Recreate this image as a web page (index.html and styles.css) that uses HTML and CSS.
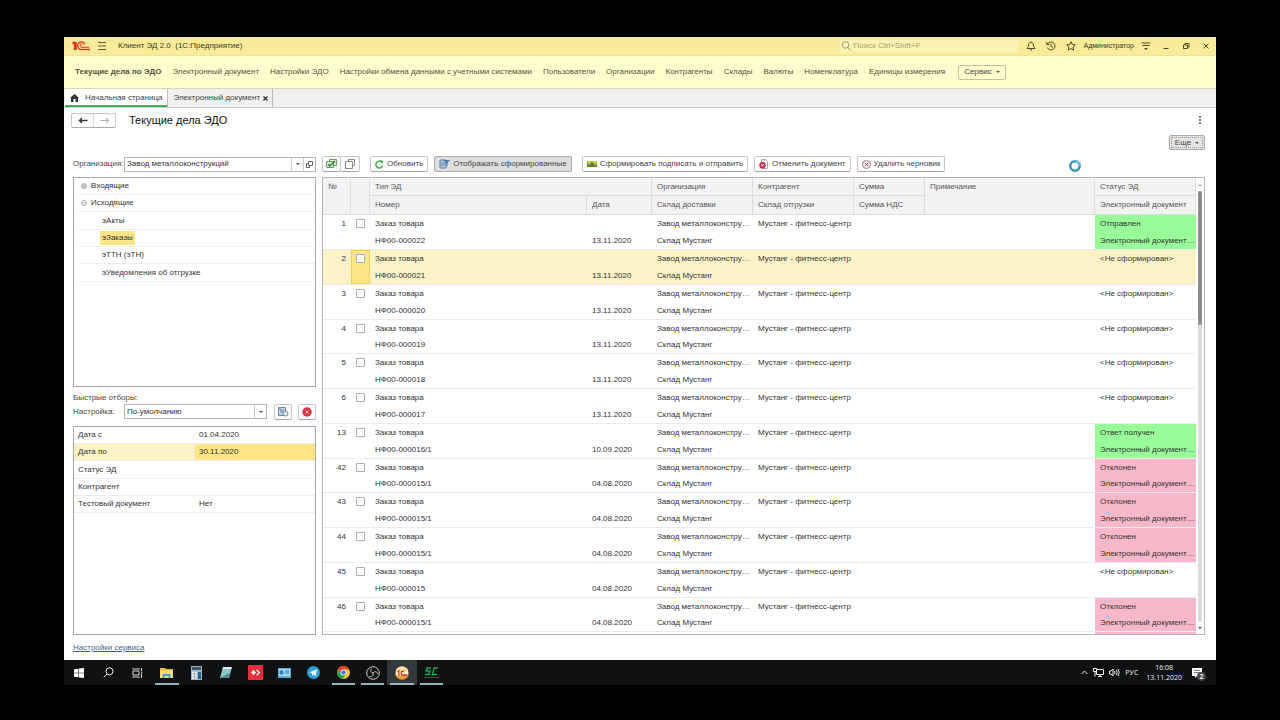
FILE: index.html
```html
<!DOCTYPE html>
<html lang="ru">
<head>
<meta charset="utf-8">
<title>Клиент ЭД 2.0</title>
<link rel="stylesheet" href="styles.css">
</head>
<body>
<div class="screen">
<header class="titlebar">
  <svg class="logo" width="18" height="10" viewBox="0 0 18 10" fill="none" stroke="#d9341f"><path d="M.5 2.500H2.500V9M4 1v8M.5 2 3 1" stroke-width="1.500"/><path d="M13 3.200A3.800 3.800 0 1 0 10 8.500H18" stroke-width="1.300"/><path d="M11.300 3.800A1.700 1.700 0 1 0 10 6.300H17" stroke-width="1"/></svg>
  <button class="icon-btn" aria-label="Меню"><svg width="10" height="8" viewBox="0 0 10 8" stroke="#5c5836"><path d="M1 .5h8M1 4h8M1 7.500h8"/></svg></button>
  <span class="app-name">Клиент ЭД 2.0 &nbsp;(1С:Предприятие)</span>
  <label class="search"><svg width="10" height="10" viewBox="0 0 10 10" fill="none" stroke="#a39c62"><circle cx="4.500" cy="4" r="3.300"/><path d="m7 6.500 2.500 3"/></svg><input type="search" placeholder="Поиск Ctrl+Shift+F" aria-label="Поиск"></label>
  <div class="tools">
    <button class="icon-btn" aria-label="Уведомления"><svg width="10" height="10" viewBox="0 0 10 10" fill="none" stroke="#4c4828"><path d="M1 7.500h8L7.500 5.500C7.500 2.500 6.500 1 5 1S2.500 2.500 2.500 5.500zM4 9h2"/></svg></button>
    <button class="icon-btn" aria-label="История"><svg width="10" height="10" viewBox="0 0 10 10" fill="none" stroke="#4c4828"><path d="M1.500 3A4 4 0 1 1 1.300 6.500M.8 1v2.500h2.500M5 2.500V5.300l2 1"/></svg></button>
    <button class="icon-btn" aria-label="Избранное"><svg width="10" height="10" viewBox="0 0 10 10" fill="none" stroke="#4c4828"><path d="m5 .8 1.300 2.700 3 .4-2.200 2.100.5 3L5 7.600 2.400 9l.5-3L.7 3.900l3-.4z"/></svg></button>
    <span class="user">Администратор</span>
    <button class="icon-btn" aria-label="Настройки"><svg width="10" height="8" viewBox="0 0 10 8" stroke="#4c4828"><path d="M.5 1h9M1.500 3.500h7"/><path d="m3 6 2 2 2-2z" fill="#4c4828" stroke="none"/></svg></button>
  </div>
  <div class="win">
    <button class="icon-btn" aria-label="Свернуть"><svg width="8" height="8" viewBox="0 0 8 8" stroke="#4c4828"><path d="M1.500 6.500h5"/></svg></button>
    <button class="icon-btn" aria-label="Развернуть"><svg width="8" height="8" viewBox="0 0 8 8" fill="none" stroke="#4c4828"><path d="M1.500 3h4v3.500h-4zM3 3V1.500h4V5H5.500"/></svg></button>
    <button class="icon-btn" aria-label="Закрыть"><svg width="8" height="8" viewBox="0 0 8 8" stroke="#4c4828"><path d="m1.500 1.500 5 5M6.500 1.500l-5 5"/></svg></button>
  </div>
</header>
<nav class="sections">
  <a href="#" class="current">Текущие дела по ЭДО</a><a href="#">Электронный документ</a><a href="#">Настройки ЭДО</a><a href="#">Настройки обмена данными с учетными системами</a><a href="#">Пользователи</a><a href="#">Организации</a><a href="#">Контрагенты</a><a href="#">Склады</a><a href="#">Валюты</a><a href="#">Номенклатура</a><a href="#">Единицы измерения</a>
  <button class="service">Сервис <i class="caret"></i></button>
</nav>
<div class="tabs">
  <button class="tab active"><svg width="9" height="8" viewBox="0 0 9 8" fill="#333"><path d="M4.500 0 9 4H8v4H5.500V5h-2v3H1V4H0z"/></svg>Начальная страница</button>
  <button class="tab">Электронный документ <svg width="5" height="5" viewBox="0 0 5 5" stroke="#333" stroke-width="1.200"><path d="m.5.5 4 4M4.500.5l-4 4"/></svg></button>
</div>
<main class="page">
  <div class="heading">
    <div class="history">
      <button aria-label="Назад"><svg width="10" height="7" viewBox="0 0 10 7" fill="none" stroke="#333" stroke-width="1.400"><path d="M9.500 3.500H1.500M4 1 1.500 3.500 4 6"/></svg></button><button aria-label="Вперед"><svg width="10" height="7" viewBox="0 0 10 7" fill="none" stroke="#b4b4b4" stroke-width="1.200"><path d="M.5 3.500h8M6 1l2.500 2.500L6 6"/></svg></button>
    </div>
    <h1>Текущие дела ЭДО</h1>
    <button class="icon-btn dots" aria-label="Ещё"><svg width="2" height="8" viewBox="0 0 2 8" fill="#777"><path d="M0 0h2v2H0zM0 3h2v2H0zM0 6h2v2H0z"/></svg></button>
  </div>
  <div class="more-row"><button class="btn more">Еще <i class="caret"></i></button></div>
  <div class="workspace">
    <section class="side">
      <div class="field">
        <label for="org">Организация:</label>
        <div class="combo"><input id="org" value="Завод металлоконструкций"><button aria-label="Выбрать"><i class="caret"></i></button><button aria-label="Открыть"><svg width="7" height="7" viewBox="0 0 7 7" fill="none" stroke="#666"><path d="M2.500.5h4v4h-4zM2.500 2.500h-2v4h3v-2"/></svg></button></div>
      </div>
      <ul class="tree">
        <li><svg width="6" height="6" viewBox="0 0 6 6" fill="none" stroke="#aaa"><circle cx="3" cy="3" r="2.500"/><path d="M1 3h4M3 1v4"/></svg>Входящие</li>
        <li><svg width="6" height="6" viewBox="0 0 6 6" fill="none" stroke="#aaa"><circle cx="3" cy="3" r="2.500"/><path d="M1 3h4"/></svg>Исходящие</li>
        <li class="leaf"><span>эАкты</span></li>
        <li class="leaf"><span class="picked">эЗаказы</span></li>
        <li class="leaf"><span>эТТН (эТН)</span></li>
        <li class="leaf"><span>эУведомления об отгрузке</span></li>
      </ul>
      <p class="caption">Быстрые отборы:</p>
      <div class="field preset">
        <label for="preset">Настройка:</label>
        <div class="combo"><select id="preset"><option>По-умолчанию</option></select><span class="drop"><i class="caret"></i></span></div>
        <button class="btn square" aria-label="Сохранить"><svg width="11" height="10" viewBox="0 0 11 10" fill="#c9d9e8" stroke="#6f859b"><path d="M.5.5h7v8h-7z"/><path d="M2 3h4M2 5h3M2 1v2"/><circle cx="7.500" cy="6.500" r="2.500" fill="#e8f0f7"/></svg></button>
        <button class="btn square" aria-label="Удалить"><svg width="10" height="10" viewBox="0 0 10 10"><circle cx="5" cy="5" r="4.700" fill="#d9353f"/><path d="m3.500 3.500 3 3m0-3-3 3" stroke="#ffc9c9"/></svg></button>
      </div>
      <div class="filters">
        <table>
          <tr><th scope="row">Дата с</th><td>01.04.2020</td></tr>
          <tr class="picked"><th scope="row">Дата по</th><td>30.11.2020</td></tr>
          <tr><th scope="row">Статус ЭД</th><td></td></tr>
          <tr><th scope="row">Контрагент</th><td></td></tr>
          <tr><th scope="row">Тестовый документ</th><td>Нет</td></tr>
        </table>
      </div>
    </section>
    <section class="docs">
      <div class="commands">
        <div class="pair"><button class="btn" aria-label="Отметить все"><svg width="11" height="10" viewBox="0 0 11 10" fill="#dff0dc" stroke="#6b9a67"><path d="M3.500.5h7v6h-7z"/><path d="M.5 2.500h7v6h-7z"/><path d="m2 5 2 2 5-5" fill="none" stroke="#23902b" stroke-width="1.500"/></svg></button><button class="btn" aria-label="Снять отметки"><svg width="10" height="10" viewBox="0 0 10 10" fill="#fff" stroke="#888"><path d="M3.500.5h6v6h-6z"/><path d="M.5 2.500h7v7h-7z"/></svg></button></div>
        <button class="btn refresh"><svg width="9" height="9" viewBox="0 0 9 9" fill="none" stroke="#35a046" stroke-width="1.400"><path d="M7.800 5.500A3.500 3.500 0 1 1 6.500 1.700"/><path d="M5 .2 8.500 1 7 3.800z" fill="#35a046" stroke="none"/></svg>Обновить</button>
        <button class="btn pressed"><svg width="11" height="10" viewBox="0 0 11 10"><path d="M1 1h6v8H1z" fill="#b9cfe2" stroke="#5e7f9e"/><path d="M2 4h4M2 6h4" stroke="#5e7f9e"/><path d="M4 1h7L8.500 4v3.500L7 6V4z" fill="#4c7dab"/></svg>Отображать сформированные</button>
        <button class="btn send"><svg width="10" height="8" viewBox="0 0 10 8"><path d="M0 1h10v6H0z" fill="#b7c84a"/><path d="M0 7V3l3 2 2-3 3 3 2-1v3z" fill="#5f8a35"/><circle cx="5" cy="4" r="1.500" fill="#805a35"/></svg>Сформировать подписать и отправить</button>
        <button class="btn"><svg width="10" height="10" viewBox="0 0 10 10"><path d="M2.500.5h4l2 2v7h-6z" fill="#fff" stroke="#b9a0a8"/><circle cx="3.500" cy="6.300" r="3.200" fill="#c22a45"/><path d="m2.300 5.100 2.400 2.400m0-2.400L2.300 7.500" stroke="#fff"/></svg>Отменить документ</button>
        <button class="btn"><svg width="9" height="9" viewBox="0 0 9 9" fill="#f6eaea" stroke="#a08484"><circle cx="4.500" cy="4.500" r="4"/><path d="m3 3 3 3m0-3L3 6" stroke="#9a4c58"/></svg>Удалить черновик</button>
      </div>
      <div class="grid">
        <div class="rows">
        <table>
          <colgroup><col class="c-num"><col class="c-check"><col class="c-type"><col class="c-date"><col class="c-org"><col class="c-org"><col class="c-sum"><col><col class="c-org"></colgroup>
          <thead>
            <tr><th rowspan="2">№</th><th rowspan="2"></th><th colspan="2">Тип ЭД</th><th>Организация</th><th>Контрагент</th><th>Сумма</th><th rowspan="2">Примечание</th><th>Статус ЭД</th></tr>
            <tr><th>Номер</th><th>Дата</th><th>Склад доставки</th><th>Склад отгрузки</th><th>Сумма НДС</th><th>Электронный документ</th></tr>
          </thead>
          <tbody class="sent"><tr><td rowspan="2">1</td><td rowspan="2"><input type="checkbox" aria-label="1"></td><td colspan="2">Заказ товара</td><td>Завод металлоконстру…</td><td>Мустанг - фитнесс-центр</td><td></td><td rowspan="2"></td><td>Отправлен</td></tr><tr><td>НФ00-000022</td><td>13.11.2020</td><td>Склад Мустанг</td><td></td><td></td><td>Электронный документ…</td></tr></tbody>
          <tbody class="selected"><tr><td rowspan="2">2</td><td rowspan="2"><input type="checkbox" aria-label="2"></td><td colspan="2">Заказ товара</td><td>Завод металлоконстру…</td><td>Мустанг - фитнесс-центр</td><td></td><td rowspan="2"></td><td>&lt;Не сформирован&gt;</td></tr><tr><td>НФ00-000021</td><td>13.11.2020</td><td>Склад Мустанг</td><td></td><td></td><td></td></tr></tbody>
          <tbody><tr><td rowspan="2">3</td><td rowspan="2"><input type="checkbox" aria-label="3"></td><td colspan="2">Заказ товара</td><td>Завод металлоконстру…</td><td>Мустанг - фитнесс-центр</td><td></td><td rowspan="2"></td><td>&lt;Не сформирован&gt;</td></tr><tr><td>НФ00-000020</td><td>13.11.2020</td><td>Склад Мустанг</td><td></td><td></td><td></td></tr></tbody>
          <tbody><tr><td rowspan="2">4</td><td rowspan="2"><input type="checkbox" aria-label="4"></td><td colspan="2">Заказ товара</td><td>Завод металлоконстру…</td><td>Мустанг - фитнесс-центр</td><td></td><td rowspan="2"></td><td>&lt;Не сформирован&gt;</td></tr><tr><td>НФ00-000019</td><td>13.11.2020</td><td>Склад Мустанг</td><td></td><td></td><td></td></tr></tbody>
          <tbody><tr><td rowspan="2">5</td><td rowspan="2"><input type="checkbox" aria-label="5"></td><td colspan="2">Заказ товара</td><td>Завод металлоконстру…</td><td>Мустанг - фитнесс-центр</td><td></td><td rowspan="2"></td><td>&lt;Не сформирован&gt;</td></tr><tr><td>НФ00-000018</td><td>13.11.2020</td><td>Склад Мустанг</td><td></td><td></td><td></td></tr></tbody>
          <tbody><tr><td rowspan="2">6</td><td rowspan="2"><input type="checkbox" aria-label="6"></td><td colspan="2">Заказ товара</td><td>Завод металлоконстру…</td><td>Мустанг - фитнесс-центр</td><td></td><td rowspan="2"></td><td>&lt;Не сформирован&gt;</td></tr><tr><td>НФ00-000017</td><td>13.11.2020</td><td>Склад Мустанг</td><td></td><td></td><td></td></tr></tbody>
          <tbody class="sent"><tr><td rowspan="2">13</td><td rowspan="2"><input type="checkbox" aria-label="13"></td><td colspan="2">Заказ товара</td><td>Завод металлоконстру…</td><td>Мустанг - фитнесс-центр</td><td></td><td rowspan="2"></td><td>Ответ получен</td></tr><tr><td>НФ00-000016/1</td><td>10.09.2020</td><td>Склад Мустанг</td><td></td><td></td><td>Электронный документ…</td></tr></tbody>
          <tbody class="declined"><tr><td rowspan="2">42</td><td rowspan="2"><input type="checkbox" aria-label="42"></td><td colspan="2">Заказ товара</td><td>Завод металлоконстру…</td><td>Мустанг - фитнесс-центр</td><td></td><td rowspan="2"></td><td>Отклонен</td></tr><tr><td>НФ00-000015/1</td><td>04.08.2020</td><td>Склад Мустанг</td><td></td><td></td><td>Электронный документ…</td></tr></tbody>
          <tbody class="declined"><tr><td rowspan="2">43</td><td rowspan="2"><input type="checkbox" aria-label="43"></td><td colspan="2">Заказ товара</td><td>Завод металлоконстру…</td><td>Мустанг - фитнесс-центр</td><td></td><td rowspan="2"></td><td>Отклонен</td></tr><tr><td>НФ00-000015/1</td><td>04.08.2020</td><td>Склад Мустанг</td><td></td><td></td><td>Электронный документ…</td></tr></tbody>
          <tbody class="declined"><tr><td rowspan="2">44</td><td rowspan="2"><input type="checkbox" aria-label="44"></td><td colspan="2">Заказ товара</td><td>Завод металлоконстру…</td><td>Мустанг - фитнесс-центр</td><td></td><td rowspan="2"></td><td>Отклонен</td></tr><tr><td>НФ00-000015/1</td><td>04.08.2020</td><td>Склад Мустанг</td><td></td><td></td><td>Электронный документ…</td></tr></tbody>
          <tbody><tr><td rowspan="2">45</td><td rowspan="2"><input type="checkbox" aria-label="45"></td><td colspan="2">Заказ товара</td><td>Завод металлоконстру…</td><td>Мустанг - фитнесс-центр</td><td></td><td rowspan="2"></td><td>&lt;Не сформирован&gt;</td></tr><tr><td>НФ00-000015</td><td>04.08.2020</td><td>Склад Мустанг</td><td></td><td></td><td></td></tr></tbody>
          <tbody class="declined"><tr><td rowspan="2">46</td><td rowspan="2"><input type="checkbox" aria-label="46"></td><td colspan="2">Заказ товара</td><td>Завод металлоконстру…</td><td>Мустанг - фитнесс-центр</td><td></td><td rowspan="2"></td><td>Отклонен</td></tr><tr><td>НФ00-000015/1</td><td>04.08.2020</td><td>Склад Мустанг</td><td></td><td></td><td>Электронный документ…</td></tr></tbody>
          <tbody class="declined"><tr><td colspan="2"></td><td colspan="2"></td><td></td><td></td><td></td><td></td><td></td></tr></tbody>
        </table>
        </div>
        <div class="scrollbar"><i class="caret up"></i><div class="track"><div class="thumb"></div></div><i class="caret"></i></div>
      </div>
      <svg class="busy" width="14" height="14" viewBox="0 0 14 14" fill="none"><circle cx="7" cy="7" r="4.700" stroke="#3f93c4" stroke-width="2.600"/><path d="M7 2.300A4.700 4.700 0 0 1 11.700 7" stroke="#6cb9dc" stroke-width="2.600"/></svg>
    </section>
  </div>
  <footer><a href="#">Настройки сервиса</a></footer>
</main>
<div class="taskbar">
  <div class="apps">
    <button aria-label="Пуск"><svg width="10" height="10" viewBox="0 0 10 10" fill="#fff"><path d="M0 1.300 4.500.7v4H0zM5 .6 10 0v4.700H5zM0 5.300h4.500v4L0 8.700zM5 5.300h5V10L5 9.400z"/></svg></button>
    <button aria-label="Поиск"><svg width="11" height="11" viewBox="0 0 11 11" fill="none" stroke="#eee"><circle cx="6.500" cy="4.300" r="3.500"/><path d="M4 7 .8 10.300"/></svg></button>
    <button aria-label="Задачи"><svg width="11" height="10" viewBox="0 0 11 10" fill="none" stroke="#ddd"><path d="M1 3h6v4H1zM.5 .5V1h7V.5M.5 9.500V9h7v.5M9.500 0v3M9.500 5.500V10M9 4.300h1.500"/></svg></button>
    <button class="running" aria-label="Проводник"><svg width="13" height="11" viewBox="0 0 13 11"><path d="M0 1h5l1 1h7v9H0z" fill="#e9b93a"/><path d="M0 3.500h13V11H0z" fill="#fadf79"/><path d="M2.500 7h8v4h-2V9h-4v2h-2z" fill="#4c9bd2"/></svg></button>
    <button aria-label="Калькулятор"><svg width="11" height="14" viewBox="0 0 11 14"><path d="M0 0h11v14H0z" fill="#9eb3bf"/><path d="M1 1h9v3H1z" fill="#39566a"/><path d="M1 5.500h2v2H1zm3 0h2v2H4zm-3 3h2v2H1zm3 0h2v2H4zm-3 3h2v1.500H1zm3 0h2v1.500H4z" fill="#f3f7f9"/><path d="M7 6h3v7H7z" fill="#276593"/></svg></button>
    <button aria-label="Блокнот"><svg width="13" height="13" viewBox="0 0 13 13"><path d="M4 1h9l-3 11H1z" fill="#8fc7c6"/><path d="M4 1h9l-1 2H3.500z" fill="#d8efef"/><path d="M1 12 8 8l3.500-1L10 12z" fill="#4f8f94"/></svg></button>
    <button aria-label="AnyDesk"><svg width="15" height="15" viewBox="0 0 15 15"><path d="M0 0h15v15H0z" fill="#e7303f"/><path d="m5.500 5 2.500 2.500L5.500 10 3 7.500zM8 5l1-.8 3.300 3.300L9 10.800 8 10l2.500-2.500z" fill="#fff"/></svg></button>
    <button aria-label="Панель"><svg width="13" height="10" viewBox="0 0 13 10"><path d="M0 0h13v10H0z" fill="#55ade0"/><path d="M1 1h11v7H1z" fill="#a9dcf4"/><path d="M2 3h3v3H2zM7 3h4M7 5h4" fill="#2f7db1" stroke="#2f7db1"/></svg></button>
    <button aria-label="Telegram"><svg width="13" height="13" viewBox="0 0 13 13"><circle cx="6.500" cy="6.500" r="6.500" fill="#2ba0da"/><path d="m2.500 6.300 7.500-3-1.300 6.900-2.200-1.700-1.200 1.200-.2-2.200z" fill="#fff"/></svg></button>
    <button class="running" aria-label="Chrome"><svg width="13" height="13" viewBox="0 0 13 13"><circle cx="6.500" cy="6.500" r="6.500" fill="#fbc728"/><path d="M.9 3.200A6.500 6.500 0 0 1 12.200 3.500H6.500L3.700 8z" fill="#e0422f"/><path d="M.9 3.200A6.500 6.500 0 0 0 6 13L9 8 4 8z" fill="#30a350"/><circle cx="6.500" cy="6.500" r="3" fill="#fff"/><circle cx="6.500" cy="6.500" r="2.300" fill="#3f7fe8"/></svg></button>
    <button class="running" aria-label="OBS"><svg width="14" height="14" viewBox="0 0 14 14" fill="none" stroke="#c8c8c8"><circle cx="7" cy="7" r="6.300"/><path d="M7 7C4 6.500 4 3.500 6 2.500M7 7c2-2.500 4.500-1 4.500 1M7 7c1 3-1.500 4.500-3.500 3.500"/></svg></button>
    <button class="running focused" aria-label="1С"><svg width="14" height="14" viewBox="0 0 14 14" fill="none"><circle cx="7" cy="7" r="6.800" fill="#f19a35"/><path d="M1 4a6.800 6.800 0 0 1 12 0z" fill="#fbe3b0"/><path d="M1 4.500h12v5H1z" fill="#fff4cf"/><path d="m2.500 6 1.300-1v4.500M9 5.800a1.800 1.800 0 1 0-1 3.200h4.500" stroke="#d12e1e" stroke-width="1.300"/></svg></button>
    <button class="running" aria-label="SC"><svg width="15" height="12" viewBox="0 0 15 12" fill="none" stroke="#20a65a"><path d="M7 1H3L2 4h4L5 7.500H1M14 1h-4L8.500 7.500H13" stroke-width="1.400"/><path d="M0 10.500h15" stroke="#14663a"/></svg></button>
  </div>
  <div class="tray">
    <svg width="7" height="5" viewBox="0 0 7 5" fill="none" stroke="#eee"><path d="m.5 4 3-3 3 3"/></svg>
    <svg width="11" height="9" viewBox="0 0 11 9" fill="none" stroke="#eee"><path d="M3.500 1.500h7v5h-7zM5 8.500h4M7 6.500v2M.5.5h3v3h-3zM2 3.500v5"/></svg>
    <svg width="11" height="9" viewBox="0 0 11 9" fill="none" stroke="#eee"><path d="M.5 3h1.500l2-2v7l-2-2H.5zM5.500 3q1 1.500 0 3M7.300 2q1.700 2.500 0 5M9 1q2.500 3.500 0 7"/></svg>
    <span>РУС</span>
    <time>16:08<br>13.11.2020</time>
    <span class="notes"><svg width="10" height="10" viewBox="0 0 10 10" fill="#fff"><path d="M0 0h10v8H5L3 10V8H0z"/><path d="M2 2.500h6M2 4.500h6" stroke="#777"/></svg><b>2</b></span>
  </div>
</div>
</div>
</body>
</html>
```
FILE: styles.css
```css
* { box-sizing: border-box; }
html, body { height: 100%; margin: 0; }
body { background: #000; color: #444; font: 8px/10px "Liberation Sans", Arial, sans-serif; }
button, input, select { font: inherit; color: inherit; margin: 0; padding: 0; border: 0; background: none; border-radius: 0; outline: 0; }
button { display: inline-flex; align-items: center; justify-content: center; white-space: nowrap; }
svg { flex: none; display: block; }
.screen { height: 100%; padding: 37px 5vw 35px; display: flex; flex-direction: column; }
.caret { display: inline-block; border: 2px solid transparent; border-top-color: #555; border-bottom: 0; }
.caret.up { border-top: 0; border-bottom: 2px solid #aaa; }

.titlebar { flex: none; height: 19px; display: flex; align-items: center; padding: 0 4px 0 8px; background: #f8ec9b; border-bottom: 1px solid #f3e58c; }
.titlebar .icon-btn { width: 12px; height: 12px; }
.titlebar > .icon-btn { margin-left: 6px; }
.app-name { margin-left: 10px; flex: 1; color: #3d3a22; }
.search { display: flex; align-items: center; gap: 2px; width: 178px; height: 13px; padding-left: 1px; background: #fbf3b4; }
.search input { flex: 1; min-width: 0; appearance: none; }
.search input::placeholder { color: #a8a16b; opacity: 1; }
.tools { display: flex; align-items: center; gap: 8px; margin-left: 7px; font-size: 7px; color: #3d3a22; }
.tools .user { margin: 0 -2px; }
.win { display: flex; gap: 8px; margin-left: 8px; }

.sections { flex: none; height: 33px; display: flex; align-items: center; gap: 11px; padding-left: 11px; background: #fdfdcd; border-bottom: 1px solid #d6d6b4; white-space: nowrap; }
.sections a { color: #55543c; text-decoration: none; }
.sections .current { font-weight: bold; }
.service { width: 48px; height: 15px; gap: 4px; margin-left: 2px; border: 1px solid #c4c49c; border-radius: 2px; }

.tabs { flex: none; height: 19px; display: flex; padding-left: 1px; background: #f0f0f0; border-bottom: 1px solid #ccc; }
.tab { gap: 3px; padding: 0 4px 0 5px; border-right: 1px solid #bbb; }
.tab.active { gap: 6px; padding: 0 5px; background: #fff; box-shadow: inset 0 -2px #4eaa5e; }

.page { flex: 1; min-height: 0; display: flex; flex-direction: column; background: #fff; padding: 0 11px 0 9px; }
.heading { height: 24px; display: flex; align-items: center; margin-left: -2px; }
.history { display: flex; width: 45px; height: 15px; border: 1px solid #c8c8c8; border-bottom-color: #aaa; border-radius: 2px; }
.history button { flex: 1; }
.history button + button { border-left: 1px solid #ddd; }
h1 { margin: 0 0 0 13px; font-size: 11px; line-height: 16px; font-weight: normal; color: #111; flex: 1; }
.dots { width: 10px; height: 12px; }
.more-row { display: flex; justify-content: flex-end; padding: 3px 0 6px; }
.btn { height: 16px; padding: 0 4px; gap: 3px; background: #fff; border: 1px solid #c6c6c6; border-bottom-color: #a4a4a4; border-radius: 2px; }
.btn.more { width: 36px; height: 15px; gap: 4px; background: #e4e4e4; border-color: #aaa; outline: 1px dotted #999; outline-offset: -3px; }
.workspace { flex: 1; min-height: 0; display: flex; gap: 6px; }

.side { flex: none; width: 243px; display: flex; flex-direction: column; }
.field { display: flex; align-items: center; height: 16px; margin-bottom: 5px; }
.field label { width: 51px; white-space: nowrap; }
.combo { flex: 1; min-width: 0; display: flex; height: 15px; border: 1px solid #b4b4b4; color: #333; }
.combo input, .combo select { flex: 1; min-width: 0; padding-left: 2px; appearance: none; }
.combo button, .drop { display: flex; align-items: center; justify-content: center; width: 12px; border-left: 1px solid #ccc; }
.tree, .filters { flex: 1 1 0; min-height: 0; margin: 0; padding: 0; list-style: none; border: 1px solid #a8a8a8; color: #333; overflow: hidden; }
.tree li { display: flex; align-items: center; gap: 4px; height: 17px; margin: 0 0 0 4px; padding-left: 3px; border-bottom: 1px solid #eee; }
.tree li:nth-child(3n) { height: 18px; }
.tree .leaf { padding-left: 22px; }
.leaf span { padding: 2px; }
.leaf .picked { background: #fbe584; }
.caption { margin: 6px 0 1px; }
.preset { margin-bottom: 6px; }
.square { width: 18px; padding: 0; margin-left: 7px; }
.square + .square { margin-left: 6px; }
.filters table { width: 100%; border-collapse: collapse; }
.filters tr { height: 17px; }
.filters tr:nth-child(3n) { height: 18px; }
.filters th, .filters td { padding: 0 4px; font-weight: normal; text-align: left; border-bottom: 1px solid #eee; }
.filters th { width: 121px; }
.filters .picked th { background: #fcf2c8; }
.filters .picked td { background: #fbe584; }

.docs { position: relative; flex: 1; min-width: 0; display: flex; flex-direction: column; }
.commands { display: flex; gap: 6px; margin-bottom: 5px; }
.pair { display: flex; margin-right: 4px; }
.pair .btn { width: 19px; padding: 0; }
.pair .btn + .btn { border-left: 0; }
.pressed { background: #dedede; border-color: #aaa; }
.send { margin-left: 4px; }
.busy { position: absolute; left: 746px; top: 3px; }
.grid { flex: 1; min-height: 0; display: flex; border: 1px solid #b4b4b4; }
.rows { flex: 1; min-width: 0; overflow: hidden; }
.rows table { width: 100%; table-layout: fixed; border-collapse: separate; border-spacing: 0; }
.c-num { width: 28px; }
.c-check { width: 19px; }
.c-type { width: 217px; }
.c-date { width: 65px; }
.c-org { width: 101px; }
.c-sum { width: 71px; }
.rows th, .rows td { height: 17px; padding: 0 0 0 5px; text-align: left; white-space: nowrap; overflow: hidden; text-overflow: ellipsis; }
.rows th { height: 18px; font-weight: normal; background: #f2f2f2; border-right: 1px solid #dcdcdc; border-bottom: 1px solid #dcdcdc; color: #555; }
.rows thead tr + tr th { height: 19px; }
.rows [rowspan] { vertical-align: top; padding-top: 4px; }
.rows td { color: #333; }
.rows tbody tr + tr td, .rows td[rowspan] { border-bottom: 1px solid #ebebeb; }
.rows tbody tr + tr td { height: 18px; }
.rows tbody:nth-of-type(4n) tr + tr td { height: 17px; }
.rows td[rowspan]:first-child { text-align: right; padding-right: 5px; }
.rows input { display: block; appearance: none; width: 9px; height: 9px; border: 1px solid #aaa; border-radius: 1px; background: #fff; }
.selected td { background: #fcf2c8; }
.rows .selected td:nth-child(2)[rowspan] { background: #fbe584; box-shadow: inset 0 0 0 1px #ecd15c; }
.sent td:last-child { background: #98fd98; }
.declined td:last-child { background: #f9b7ca; }
.scrollbar { flex: none; width: 8px; display: flex; flex-direction: column; align-items: center; justify-content: space-between; padding: 6px 0 5px; }
.track { flex: 1; width: 4px; margin: 5px 0; background: #ddd; }
.thumb { height: 31%; background: #8c8c8c; border-radius: 2px; }
footer { flex: none; height: 25px; display: flex; align-items: center; }
footer a { color: #3f5f9c; }

.taskbar { flex: none; height: 25px; display: flex; justify-content: space-between; background: #101112; color: #eee; font: 7px/10px "Open Sans", sans-serif; }
.apps { display: flex; width: 382px; }
.apps button { position: relative; flex: 1; }
.running::after { content: ""; position: absolute; left: 3px; right: 3px; bottom: 0; height: 2px; background: #8fb5b5; }
.focused { background: #33383a; }
.tray { display: flex; align-items: center; gap: 5px; padding-right: 14px; }
.tray time { margin: 0 5px 0 3px; text-align: center; }
.notes { position: relative; }
.notes b { position: absolute; left: 5px; top: 4px; width: 9px; height: 9px; border-radius: 50%; background: #444; text-align: center; font-size: 7px; line-height: 9px; }
```
